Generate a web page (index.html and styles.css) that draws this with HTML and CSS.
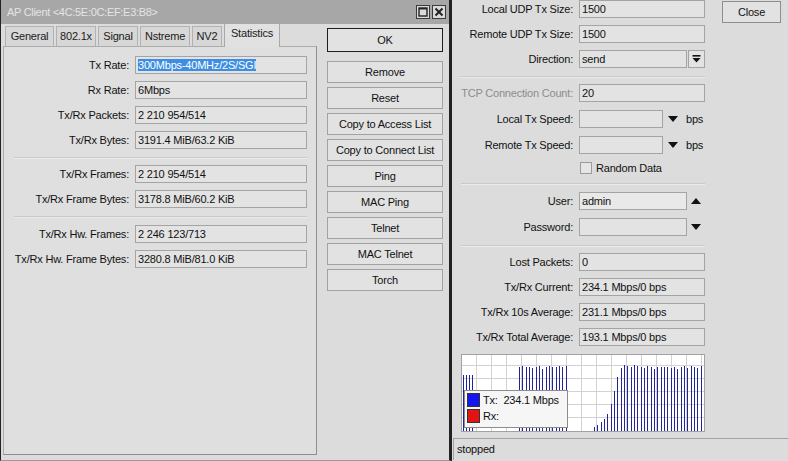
FILE: index.html
```html
<!DOCTYPE html>
<html>
<head>
<meta charset="utf-8">
<title>AP Client</title>
<link rel="stylesheet" href="styles.css">
</head>
<body>
<div class="desk">
  <div class="win win-ap">
    <div class="titlebar">
      <span class="title">AP Client &lt;4C:5E:0C:EF:E3:B8&gt;</span>
      <div class="tb-btns">
        <span class="tb-btn"><svg width="12" height="12" viewBox="0 0 12 12"><rect x="2" y="2" width="8" height="8" fill="none" stroke="#222" stroke-width="1.4"/><line x1="2" y1="2.8" x2="10" y2="2.8" stroke="#222" stroke-width="1.4"/></svg></span>
        <span class="tb-btn"><svg width="12" height="12" viewBox="0 0 12 12"><path d="M2.5 2.5L9.5 9.5M9.5 2.5L2.5 9.5" stroke="#222" stroke-width="2"/></svg></span>
      </div>
    </div>
    <div class="ap-body">
      <div class="tabpane">
        <div class="tabs">
          <div class="tab w-general">General</div>
          <div class="tab w-8021x">802.1x</div>
          <div class="tab w-signal">Signal</div>
          <div class="tab w-nstreme">Nstreme</div>
          <div class="tab w-nv2">NV2</div>
          <div class="tab w-stats active">Statistics</div>
        </div>
        <div class="panel">
          <div class="row"><label>Tx Rate:</label><div class="field"><span class="sel">300Mbps-40MHz/2S/SGI</span></div></div>
          <div class="row"><label>Rx Rate:</label><div class="field">6Mbps</div></div>
          <div class="row"><label>Tx/Rx Packets:</label><div class="field">2 210 954/514</div></div>
          <div class="row"><label>Tx/Rx Bytes:</label><div class="field">3191.4 MiB/63.2 KiB</div></div>
          <div class="sep"></div>
          <div class="row"><label>Tx/Rx Frames:</label><div class="field">2 210 954/514</div></div>
          <div class="row"><label>Tx/Rx Frame Bytes:</label><div class="field">3178.8 MiB/60.2 KiB</div></div>
          <div class="sep sep-b"></div>
          <div class="row"><label>Tx/Rx Hw. Frames:</label><div class="field">2 246 123/713</div></div>
          <div class="row"><label>Tx/Rx Hw. Frame Bytes:</label><div class="field">3280.8 MiB/81.0 KiB</div></div>
        </div>
      </div>
      <div class="btncol">
        <div class="btn default">OK</div>
        <div class="btn">Remove</div>
        <div class="btn">Reset</div>
        <div class="btn">Copy to Access List</div>
        <div class="btn">Copy to Connect List</div>
        <div class="btn">Ping</div>
        <div class="btn">MAC Ping</div>
        <div class="btn">Telnet</div>
        <div class="btn">MAC Telnet</div>
        <div class="btn">Torch</div>
      </div>
    </div>
  </div>

  <div class="win win-bt">
    <div class="bt-main">
      <div class="form">
        <div class="frow"><label>Local UDP Tx Size:</label><div class="fld">1500</div></div>
        <div class="frow"><label>Remote UDP Tx Size:</label><div class="fld">1500</div></div>
        <div class="frow"><label>Direction:</label><div class="fld fld-combo">send</div><div class="dd-btn"><svg width="9" height="8" viewBox="0 0 9 8"><rect x="0.5" y="0" width="8" height="1.6" fill="#111"/><polygon points="0.5,3 8.5,3 4.5,7.5" fill="#111"/></svg></div></div>
        <div class="sep mt1"></div>
        <div class="frow"><label class="dis">TCP Connection Count:</label><div class="fld">20</div></div>
        <div class="frow mt1"><label>Local Tx Speed:</label><div class="fld fld-short"></div><span class="arrow"><svg width="10" height="6" viewBox="0 0 10 6"><polygon points="0,0 10,0 5,6" fill="#111"/></svg></span><span class="unit">bps</span></div>
        <div class="frow mt1"><label>Remote Tx Speed:</label><div class="fld fld-short"></div><span class="arrow"><svg width="10" height="6" viewBox="0 0 10 6"><polygon points="0,0 10,0 5,6" fill="#111"/></svg></span><span class="unit">bps</span></div>
        <div class="crow"><span class="cbox"></span><span>Random Data</span></div>
        <div class="sep mt1"></div>
        <div class="frow mt1"><label>User:</label><div class="fld fld-combo fld-edit">admin</div><span class="arrow arrow-s"><svg width="10" height="6" viewBox="0 0 10 6"><polygon points="0,6 10,6 5,0" fill="#111"/></svg></span></div>
        <div class="frow mt1"><label>Password:</label><div class="fld fld-combo"></div><span class="arrow arrow-s"><svg width="10" height="6" viewBox="0 0 10 6"><polygon points="0,0 10,0 5,6" fill="#111"/></svg></span></div>
        <div class="sep mt2"></div>
        <div class="frow"><label>Lost Packets:</label><div class="fld">0</div></div>
        <div class="frow"><label>Tx/Rx Current:</label><div class="fld">234.1 Mbps/0 bps</div></div>
        <div class="frow"><label>Tx/Rx 10s Average:</label><div class="fld">231.1 Mbps/0 bps</div></div>
        <div class="frow"><label>Tx/Rx Total Average:</label><div class="fld">193.1 Mbps/0 bps</div></div>
        <div class="graph">
          <svg width="242" height="76" viewBox="0 0 242 76">
            <path d="M14.5 0V76M29.5 0V76M44.5 0V76M59.5 0V76M74.5 0V76M89.5 0V76M104.5 0V76M119.5 0V76M134.5 0V76M149.5 0V76M164.5 0V76M179.5 0V76M194.5 0V76M209.5 0V76M224.5 0V76M239.5 0V76M0 10.5H242M0 23.5H242M0 36.5H242M0 49.5H242M0 62.5H242" stroke="#d2d2d2" stroke-width="1" fill="none"/>
            <path d="M1.5 20V76M4.5 20V76M7.5 20V76M10.5 20V76
M57.5 12V76M60.5 11V76M64.5 12V76M67.5 12V76M70.5 13V76M74.5 12V76M77.5 11V76M80.5 14V76M84.5 12V76M87.5 11V76M90.5 12V76M94.5 12V76M97.5 11V76M100.5 12V76M104.5 11V76
M132.5 72V76M135.5 70V76M139.5 67V76M142.5 64V76M145.5 59V76M149.5 49V76M152.5 36V76M155.5 22V76M159.5 13V76
M162.5 10V76M165.5 11V76M169.5 12V76M172.5 10V76M175.5 11V76M179.5 12V76M182.5 13V76M185.5 11V76M189.5 12V76M192.5 14V76M195.5 12V76M199.5 12V76M202.5 12V76M205.5 12V76M209.5 13V76M212.5 12V76M215.5 14V76M219.5 12V76M222.5 11V76M225.5 13V76M229.5 11V76M232.5 12V76M235.5 13V76M239.5 11V76" stroke="#23239a" stroke-width="1" fill="none"/>
          </svg>
          <div class="legend">
            <div class="lg-item"><span class="sw sw-tx"></span><span class="lg-text">Tx:  234.1 Mbps</span></div>
            <div class="lg-item"><span class="sw sw-rx"></span><span class="lg-text">Rx:</span></div>
          </div>
        </div>
      </div>
      <div class="side">
        <div class="btn btn-close">Close</div>
      </div>
    </div>
    <div class="status">stopped</div>
  </div>
</div>
</body>
</html>
```

FILE: styles.css
```css
html, body {
  margin: 0;
  padding: 0;
}
body {
  background: #dcdcdc;
  font-family: "Liberation Sans", Arial, sans-serif;
  font-size: 11px;
  letter-spacing: -0.2px;
  color: #111;
  overflow: hidden;
}
.desk {
  display: flex;
  width: 788px;
  height: 461px;
  overflow: hidden;
}
.win {
  box-sizing: border-box;
  height: 461px;
  display: flex;
  flex-direction: column;
  background: #dcdcdc;
}
.win-ap {
  width: 451px;
  flex: none;
  border-left: 1px solid #222;
  border-right: 2px solid #222;
  border-bottom: 1px solid #9a9a9a;
}
.titlebar {
  height: 24px;
  flex: none;
  background: #a7a7a7;
  display: flex;
  align-items: center;
  justify-content: space-between;
  padding: 0 3px 0 6px;
}
.title {
  color: #e4e4e4;
  font-size: 11px;
  letter-spacing: -0.3px;
}
.tb-btns {
  display: flex;
  gap: 2px;
}
.tb-btn {
  box-sizing: border-box;
  width: 14px;
  height: 14px;
  border: 1px solid #3a3a3a;
  background: #dadada;
  display: flex;
  align-items: center;
  justify-content: center;
}
.tb-btn svg { display: block; }

.ap-body {
  display: flex;
  flex: 1;
  padding-left: 2px;
}
.tabpane {
  width: 314px;
  margin-top: 2px;
  display: flex;
  flex-direction: column;
}
.tabs {
  display: flex;
  align-items: flex-end;
  gap: 2px;
  padding-left: 2px;
  height: 20px;
  position: relative;
  z-index: 1;
}
.tab {
  box-sizing: border-box;
  height: 20px;
  border: 1px solid #b2b2b2;
  border-bottom: none;
  background: #d7d7d7;
  text-align: center;
  line-height: 19px;
  color: #1a1a1a;
}
.tab.active {
  height: 24px;
  margin-bottom: -1px;
  background: #e1e1e1;
  line-height: 18px;
  border-color: #a8a8a8;
}
.w-general { width: 49px; }
.w-8021x { width: 40px; }
.w-signal { width: 40px; }
.w-nstreme { width: 50px; }
.w-nv2 { width: 30px; }
.w-stats { width: 56px; }

.panel {
  box-sizing: border-box;
  height: 409px;
  border: 1px solid #acacac;
  border-right-color: #8e8e8e;
  border-bottom-color: #8e8e8e;
  background: #dfdfdf;
  padding: 9px 0 0 0;
  display: flex;
  flex-direction: column;
  gap: 7px;
}
.row {
  display: flex;
  align-items: center;
  height: 18px;
}
.row label {
  width: 125px;
  margin-right: 6px;
  text-align: right;
  white-space: nowrap;
}
.field {
  box-sizing: border-box;
  width: 172px;
  height: 18px;
  border: 1px solid #a4a4a4;
  background: #e3e3e3;
  padding: 0 2px;
  line-height: 16px;
  white-space: nowrap;
  overflow: hidden;
}
.sel {
  background: #3d8ee2;
  color: #fff;
}
.sep {
  height: 1px;
  background: #c9c9c9;
  box-shadow: 0 1px 0 #ececec;
}
.panel .sep {
  margin: 1px 0 0 10px;
  width: 293px;
}
.panel .sep-b {
  margin-bottom: 1px;
}

.btncol {
  width: 116px;
  margin-left: 10px;
  padding-top: 4px;
  display: flex;
  flex-direction: column;
  gap: 4px;
}
.btn {
  box-sizing: border-box;
  height: 22px;
  border: 1px solid #a2a2a2;
  background: #e2e2e2;
  display: flex;
  align-items: center;
  justify-content: center;
  white-space: nowrap;
}
.btn.default {
  height: 24px;
  border-color: #1e1e1e;
  margin-bottom: 5px;
}

.win-bt {
  flex: 1;
  border-left: 1px solid #222;
}
.bt-main {
  display: flex;
  flex: 1;
  padding-left: 9px;
}
.form {
  width: 244px;
  display: flex;
  flex-direction: column;
  gap: 7px;
}
.form .sep {
  width: 244px;
}
.mt1 { margin-top: 1px; }
.mt2 { margin-top: 2px; }
.frow {
  display: flex;
  align-items: center;
  height: 18px;
}
.frow label {
  width: 112px;
  margin-right: 6px;
  text-align: right;
  white-space: nowrap;
}
.frow label.dis {
  color: #8c8c8c;
}
.fld {
  box-sizing: border-box;
  width: 126px;
  height: 18px;
  border: 1px solid #a4a4a4;
  background: #e3e3e3;
  padding: 0 2px;
  line-height: 16px;
  white-space: nowrap;
}
.fld-combo { width: 108px; }
.fld-short { width: 84px; }
.fld-edit { background: #e9e9e9; }
.dd-btn {
  box-sizing: border-box;
  width: 17px;
  height: 18px;
  margin-left: 1px;
  border: 1px solid #a4a4a4;
  background: #e3e3e3;
  display: flex;
  align-items: center;
  justify-content: center;
}
.dd-btn svg, .arrow svg { display: block; }
.arrow {
  margin-left: 5px;
  width: 10px;
}
.arrow-s { margin-left: 4px; }
.unit {
  margin-left: 8px;
}
.crow {
  display: flex;
  align-items: center;
  height: 14px;
  padding-left: 119px;
  gap: 4px;
}
.cbox {
  box-sizing: border-box;
  width: 12px;
  height: 12px;
  border: 1px solid #9a9a9a;
  background: #e6e6e6;
}
.graph {
  position: relative;
  box-sizing: border-box;
  margin-top: 1px;
  height: 78px;
  border: 1px solid #a2a2a2;
  background: #fff;
}
.graph svg { display: block; }
.legend {
  position: absolute;
  left: 2px;
  top: 35px;
  box-sizing: border-box;
  width: 104px;
  height: 38px;
  border: 1px solid #8c8c8c;
  background: #f6f6f6;
  padding: 2px 0 0 2px;
  display: flex;
  flex-direction: column;
  gap: 2px;
}
.lg-item {
  display: flex;
  align-items: center;
  height: 14px;
}
.sw {
  box-sizing: border-box;
  width: 13px;
  height: 14px;
  border: 1px solid #333;
  margin-right: 3px;
}
.sw-tx { background: #1515f0; }
.sw-rx { background: #e41414; }
.lg-text {
  white-space: pre;
}
.side {
  margin-left: 17px;
  padding-top: 1px;
}
.btn-close {
  width: 59px;
  height: 22px;
  border-color: #8e8e8e;
}
.status {
  box-sizing: border-box;
  height: 22px;
  margin: 0 0 1px 1px;
  border-top: 1px solid #a2a2a2;
  border-left: 1px solid #a2a2a2;
  padding-left: 3px;
  line-height: 21px;
}
```
